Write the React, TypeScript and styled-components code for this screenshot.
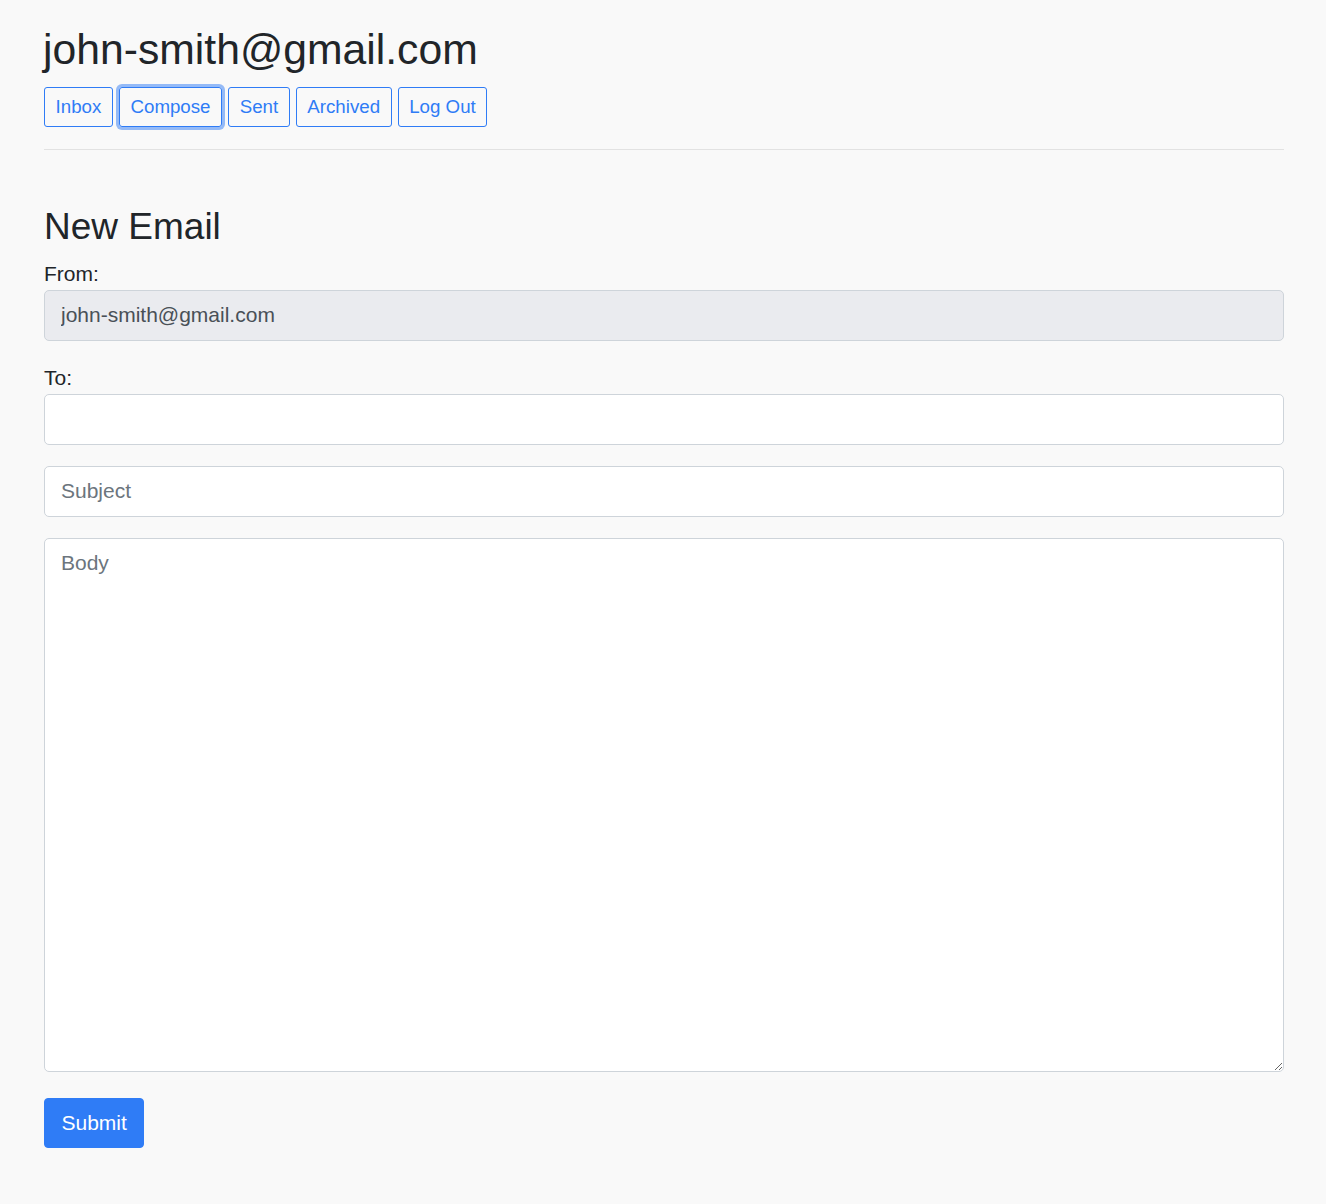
import React from "react";
import styled, { createGlobalStyle } from "styled-components";

const Global = createGlobalStyle`
  html, body { margin: 0; padding: 0; background: #f9f9f9; }
  body {
    font-family: "Liberation Sans", Arial, Helvetica, sans-serif;
    font-size: 21px;
    line-height: 1.5;
    color: #212529;
  }
  * { box-sizing: border-box; }
`;

const Page = styled.div`
  padding: 24px 42px 56px 44px;
`;

const Title = styled.h2`
  margin: 0 0 12px -1px;
  font-size: 42.7px;
  font-weight: 400;
  line-height: 1.2;
`;

const Nav = styled.nav`
  display: flex;
  gap: 6px;
`;

const NavButton = styled.button<{ $focused?: boolean }>`
  font-family: inherit;
  font-size: 18.7px;
  line-height: 1.5;
  height: 40px;
  padding: 0 10.6px;
  color: #2f7cf6;
  background: transparent;
  border: 1px solid #2f7cf6;
  border-radius: 3px;
  cursor: pointer;
  box-shadow: ${(p) => (p.$focused ? "0 0 0 3px rgba(47,124,246,0.5)" : "none")};
`;

const Rule = styled.hr`
  margin: 22px 0 0;
  border: 0;
  border-top: 1px solid #e2e2e2;
`;

const Compose = styled.form`
  margin-top: 55px;
  display: flex;
  flex-direction: column;
`;

const Heading = styled.h3`
  margin: 0 0 8px;
  font-size: 37px;
  font-weight: 400;
  line-height: 1.2;
`;

const Group = styled.div`
  display: flex;
  flex-direction: column;
  margin-bottom: 21px;
`;

const Label = styled.label`
  display: block;
  line-height: 32px;
`;

const Input = styled.input`
  width: 100%;
  height: 51px;
  padding: 0 16px;
  font-family: inherit;
  font-size: 21px;
  color: #495057;
  background: #fff;
  border: 1px solid #ced4da;
  border-radius: 5px;
  outline: none;
  &:disabled {
    background: #eaebef;
    color: #495057;
  }
  &::placeholder {
    color: #6c757d;
  }
`;

const Body = styled.textarea`
  width: 100%;
  height: 534px;
  padding: 8px 16px;
  font-family: inherit;
  font-size: 21px;
  line-height: 1.5;
  color: #495057;
  background: #fff;
  border: 1px solid #ced4da;
  border-radius: 5px;
  outline: none;
  resize: vertical;
  display: block;
  &::placeholder {
    color: #6c757d;
  }
`;

const Submit = styled.button`
  align-self: flex-start;
  margin-top: 26px;
  height: 50px;
  padding: 0 16.5px;
  font-family: inherit;
  font-size: 21px;
  color: #fff;
  background: #2f7cf6;
  border: 1px solid #2f7cf6;
  border-radius: 4px;
  cursor: pointer;
`;

export default function App() {
  const tabs = ["Inbox", "Compose", "Sent", "Archived", "Log Out"];
  return (
    <>
      <Global />
      <Page>
        <Title>john-smith@gmail.com</Title>
        <Nav>
          {tabs.map((t) => (
            <NavButton key={t} $focused={t === "Compose"}>
              {t}
            </NavButton>
          ))}
        </Nav>
        <Rule />
        <Compose onSubmit={(e) => e.preventDefault()}>
          <Heading>New Email</Heading>
          <Group>
            <Label>From:</Label>
            <Input disabled value="john-smith@gmail.com" readOnly />
          </Group>
          <Group>
            <Label>To:</Label>
            <Input />
          </Group>
          <Group>
            <Input placeholder="Subject" />
          </Group>
          <Body placeholder="Body" />
          <Submit type="submit">Submit</Submit>
        </Compose>
      </Page>
    </>
  );
}
